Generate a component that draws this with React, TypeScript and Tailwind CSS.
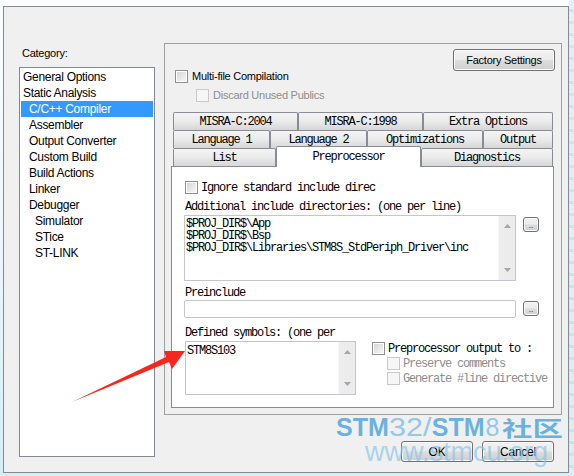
import React from "react";

const sans = "font-['Liberation_Sans',Arial,sans-serif] text-[11px] tracking-[-0.25px]";
const mono = "font-['Liberation_Mono','Courier_New',monospace] text-[12px] tracking-[-1.2px] leading-[12px] whitespace-pre";
const btn =
  "flex items-center justify-center rounded-[3px] border border-[#707070] bg-[linear-gradient(#f2f2f2_0%,#ebebeb_48%,#dddddd_52%,#cfcfcf_100%)] shadow-[inset_0_0_0_1px_#fbfbfb]";

const categories: [string, number][] = [
  ["General Options", 0],
  ["Static Analysis", 0],
  ["C/C++ Compiler", 1],
  ["Assembler", 1],
  ["Output Converter", 1],
  ["Custom Build", 1],
  ["Build Actions", 1],
  ["Linker", 1],
  ["Debugger", 1],
  ["Simulator", 2],
  ["STice", 2],
  ["ST-LINK", 2],
];

const indent = ["pl-[2px]", "pl-[8px]", "pl-[14px]"];

function Check({ disabled }: { disabled?: boolean }) {
  if (disabled)
    return <span className="block w-[13px] h-[13px] shrink-0 border border-[#c9c9c9] bg-[#f6f6f6]" />;
  return (
    <span className="block w-[13px] h-[13px] shrink-0 border border-[#8e8f8f] bg-white p-[1px]">
      <span className="block w-full h-full bg-linear-to-br from-[#d6d6d6] to-[#f7f7f7]" />
    </span>
  );
}

function Tab({ label, w, selected }: { label: string; w: string; selected?: boolean }) {
  if (selected)
    return (
      <div
        className={`${w} relative z-10 -mt-[2px] h-[21px] flex items-center justify-center border-t border-x border-[#898c95] rounded-t-[2px] bg-white ${mono}`}
      >
        {label}
      </div>
    );
  return (
    <div
      className={`${w} h-[18px] flex items-center justify-center border-t border-x border-[#898c95] rounded-t-[2px] bg-linear-to-b from-[#f4f4f4] via-[#ebebeb] to-[#d6d6d6] ${mono}`}
    >
      {label}
    </div>
  );
}

function Arrow({ up }: { up?: boolean }) {
  return (
    <svg width="7" height="4" viewBox="0 0 7 4">
      <path d={up ? "M0 4L3.5 0L7 4Z" : "M0 0L3.5 4L7 0Z"} fill="#a6a6a6" />
    </svg>
  );
}

function ScrollBar() {
  return (
    <div className="w-[17px] shrink-0 flex flex-col items-center justify-between py-[8px] bg-[#ececec] border-l border-[#f7f7f7]">
      <Arrow up />
      <Arrow />
    </div>
  );
}

function Dots() {
  return (
    <div className={`${btn} w-[16px] h-[15px] items-end pb-[2px]`}>
      <span className="block text-[8px] leading-[6px] tracking-[0px] font-['Liberation_Sans',sans-serif]">..</span>
    </div>
  );
}

function CheckRow({ label, disabled }: { label: string; disabled?: boolean }) {
  return (
    <div className="flex items-center gap-[3px] h-[13px]">
      <Check disabled={disabled} />
      <span className={`${mono} ${disabled ? "text-[#8d8d8d]" : "text-black"}`}>{label}</span>
    </div>
  );
}

export default function App() {
  return (
    <div className="relative w-[574px] h-[476px] overflow-hidden bg-linear-to-b from-[#fbfdfe] via-[#eef7fb] to-[#d4eef6] pl-[3px] pt-[6px]">
      {/* dialog */}
      <div className={`w-[566px] h-[467px] border border-[#8a8a8a] bg-[#f0f0f0] flex text-black ${sans}`}>
        {/* category column */}
        <div className="pl-[15px] pt-[39px] w-[151px] shrink-0">
          <div className="h-[14px] leading-[14px] pl-[3px]">Category:</div>
          <div className="mt-[7px] w-[136px] h-[390px] border border-[#828790] bg-white px-[1px] pt-[1px]">
            {categories.map(([name, lvl]) => (
              <div
                key={name}
                className={`h-[16px] leading-[16px] ${indent[lvl]} ${
                  name === "C/C++ Compiler" ? "bg-[#3399ff] text-white" : ""
                } text-[12px] tracking-[-0.3px]`}
              >
                {name}
              </div>
            ))}
          </div>
        </div>

        {/* options column */}
        <div className="ml-[9px] pt-[36px] flex-1 flex flex-col">
          <div className="w-[398px] h-[372px] border border-[#a0a0a0] flex flex-col">
            <div className="flex justify-between items-start">
              <div className="pt-[26px] pl-[10px]">
                <div className="flex items-center gap-[4px] h-[13px]">
                  <Check />
                  <span>Multi-file Compilation</span>
                </div>
                <div className="flex items-center gap-[4px] h-[13px] mt-[6px] ml-[21px]">
                  <Check disabled />
                  <span className="text-[#8d8d8d]">Discard Unused Publics</span>
                </div>
              </div>
              <div className={`${btn} mt-[5px] mr-[6px] w-[102px] h-[22px]`}>Factory Settings</div>
            </div>

            {/* tab strip */}
            <div className="mt-[10px] ml-[8px] w-[380px]">
              <div className="flex">
                <Tab label="MISRA-C:2004" w="w-[125px]" />
                <Tab label="MISRA-C:1998" w="w-[125px]" />
                <Tab label="Extra Options" w="w-[130px]" />
              </div>
              <div className="flex">
                <Tab label="Language 1" w="w-[97px]" />
                <Tab label="Language 2" w="w-[97px]" />
                <Tab label="Optimizations" w="w-[116px]" />
                <Tab label="Output" w="w-[70px]" />
              </div>
              <div className="flex items-start h-[18px]">
                <Tab label="List" w="w-[103px]" />
                <Tab label="Preprocessor" w="w-[145px]" selected />
                <Tab label="Diagnostics" w="w-[132px]" />
              </div>
            </div>

            {/* preprocessor page */}
            <div className="ml-[6px] w-[383px] h-[242px] border border-[#898c95] bg-white pl-[13px] pt-[14px]">
              <CheckRow label="Ignore standard include direc" />
              <div className={`${mono} mt-[7px]`}>Additional include directories: (one per line)</div>
              <div className="flex items-start gap-[7px] mt-[2px]">
                <div className="w-[332px] h-[66px] -ml-[1px] border border-[#c3c6cc] flex">
                  <div className={`${mono} flex-1 pl-[1px] pt-[2px]`}>
                    {"$PROJ_DIR$\\App\n$PROJ_DIR$\\Bsp\n$PROJ_DIR$\\Libraries\\STM8S_StdPeriph_Driver\\inc"}
                  </div>
                  <ScrollBar />
                </div>
                <div className="mt-[2px]">
                  <Dots />
                </div>
              </div>
              <div className={`${mono} mt-[6px]`}>Preinclude</div>
              <div className="flex items-start gap-[7px] mt-[1px]">
                <div className="w-[332px] h-[18px] -ml-[1px] border border-[#c3c6cc] rounded-[2px]" />
                <div className="mt-[1px]">
                  <Dots />
                </div>
              </div>
              <div className={`${mono} mt-[9px]`}>Defined symbols: (one per</div>
              <div className="flex items-start gap-[16px] mt-[2px]">
                <div className="w-[171px] h-[54px] border border-[#c3c6cc] flex">
                  <div className={`${mono} flex-1 pl-[1px] pt-[3px]`}>STM8S103</div>
                  <ScrollBar />
                </div>
                <div className="mt-[1px] flex flex-col gap-[2px]">
                  <CheckRow label="Preprocessor output to :" />
                  <div className="ml-[15px] flex flex-col gap-[2px]">
                    <CheckRow label="Preserve comments" disabled />
                    <CheckRow label="Generate #line directive" disabled />
                  </div>
                </div>
              </div>
            </div>
          </div>

          <div className="flex justify-end gap-[9px] pr-[14px] mt-[26px]">
            <div className={`${btn} w-[72px] h-[21px] text-[12px]`}>OK</div>
            <div className={`${btn} w-[72px] h-[21px] text-[12px]`}>Cancel</div>
          </div>
        </div>
      </div>

      {/* aero frame edge on the right */}
      <div className="absolute right-0 top-0 w-[5px] h-full bg-[repeating-linear-gradient(#d9edf8_0px,#d9edf8_9px,#bfe0f3_9px,#bfe0f3_12px)] opacity-80" />

      {/* red pointer arrow */}
      <svg className="absolute left-0 top-0 pointer-events-none" width="574" height="476" viewBox="0 0 574 476">
        <polygon points="72,402 166,357 164,351 185,351 172,369 169,362" fill="#f8261c" />
      </svg>

      {/* site watermark */}
      <div className="absolute left-[336px] top-[415px] pointer-events-none leading-none font-['Liberation_Sans',Arial,sans-serif]">
        <div className="text-[25px] whitespace-nowrap flex items-baseline">
          <span className="font-bold text-[#53a6dc]/85">STM</span>
          <span className="inline-block w-[43px]">
            <span className="inline-block origin-left scale-x-[1.22] text-[#7cbce6]/80">32/</span>
          </span>
          <span className="font-bold text-[#53a6dc]/85">STM</span>
          <span className="text-[#7cbce6]/80 ml-[1px] w-[16px]">8</span>
          <span className="inline-block w-[62px]">
            <span className="inline-block origin-left scale-x-[1.45] font-bold text-[#53a6dc]/85 font-['Noto_Sans_CJK_SC',sans-serif] text-[21px]">
              社区
            </span>
          </span>
        </div>
        <div className="ml-[29px] -mt-[1px] text-[27px] text-[#8cc5ea]/70 whitespace-nowrap">www.stmcu.org</div>
      </div>
    </div>
  );
}
